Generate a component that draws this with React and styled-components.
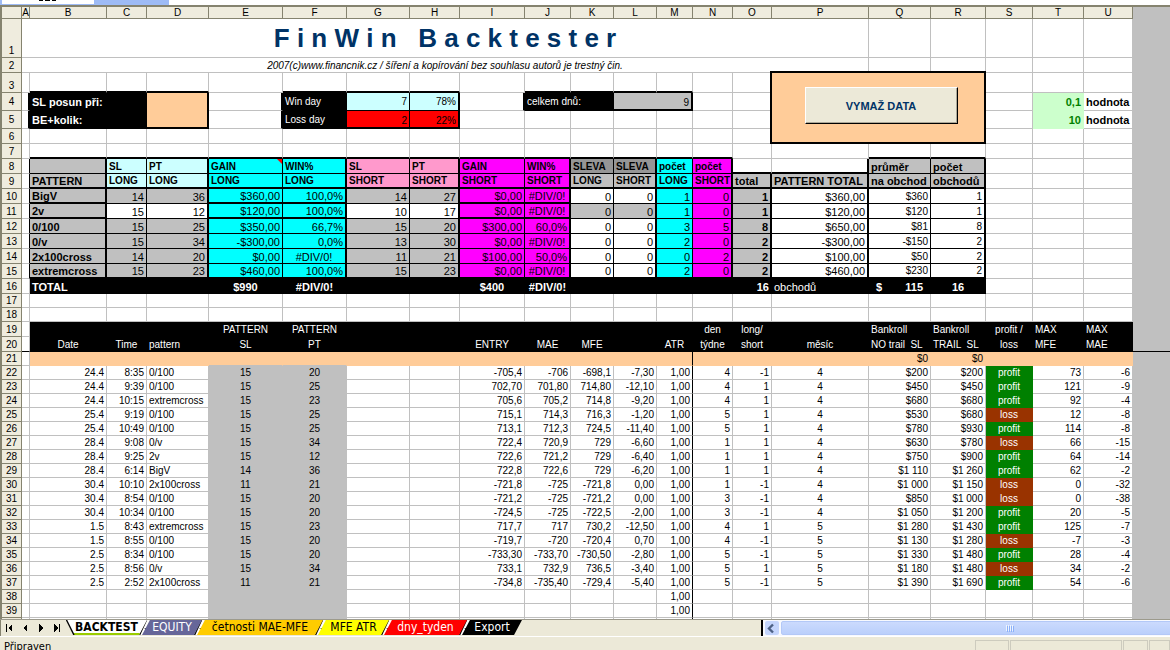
import React from 'react'
import styled, { createGlobalStyle } from 'styled-components'

const c = {
  grid: '#c0c0c0',
  chrome: '#ece9d8',
  chromeLine: '#85836f',
  black: '#000000',
  white: '#ffffff',
  peach: '#ffcc99',
  ice: '#ccffff',
  cyan: '#00ffff',
  pink: '#ff99cc',
  magenta: '#ff00ff',
  grey: '#c0c0c0',
  darkGrey: '#969696',
  mint: '#ccffcc',
  green: '#008000',
  brown: '#993300',
  red: '#ff0000',
  navy: '#003366',
}

const columns = [
  ['A', 8],
  ['B', 77],
  ['C', 40],
  ['D', 62],
  ['E', 74],
  ['F', 64],
  ['G', 63],
  ['H', 50],
  ['I', 65],
  ['J', 46],
  ['K', 43],
  ['L', 43],
  ['M', 36],
  ['N', 40],
  ['O', 39],
  ['P', 97],
  ['Q', 62],
  ['R', 55],
  ['S', 47],
  ['T', 51],
  ['U', 49],
]

const letters = columns.map(([letter]) => letter)

// pattern, SL, PT, gain, win, SL, PT, gain, win, fee, fee, count, count, total, sum, average, trades
const patterns = [
  ['BigV', 14, 36, '$360,00', '100,0%', 14, 27, '$0,00', '#DIV/0!', 0, 0, 1, 0, 1, '$360,00', '$360', 1],
  ['2v', 15, 12, '$120,00', '100,0%', 10, 17, '$0,00', '#DIV/0!', 0, 0, 1, 0, 1, '$120,00', '$120', 1],
  ['0/100', 15, 25, '$350,00', '66,7%', 15, 20, '$300,00', '60,0%', 0, 0, 3, 5, 8, '$650,00', '$81', 8],
  ['0/v', 15, 34, '-$300,00', '0,0%', 13, 30, '$0,00', '#DIV/0!', 0, 0, 2, 0, 2, '-$300,00', '-$150', 2],
  ['2x100cross', 14, 20, '$0,00', '#DIV/0!', 11, 21, '$100,00', '50,0%', 0, 0, 0, 2, 2, '$100,00', '$50', 2],
  ['extremcross', 15, 23, '$460,00', '100,0%', 15, 23, '$0,00', '#DIV/0!', 0, 0, 2, 0, 2, '$460,00', '$230', 2],
]

// date, time, pattern, SL, PT, entry, MAE, MFE, L, day, long/short, month, bankroll, trail, result, max MFE, max MAE
const trades = [
  ['24.4', '8:35', '0/100', 15, 20, '-705,4', '-706', '-698,1', '-7,30', 4, -1, 4, '$200', '$200', 'profit', 73, -6],
  ['24.4', '9:39', '0/100', 15, 25, '702,70', '701,80', '714,80', '-12,10', 4, 1, 4, '$450', '$450', 'profit', 121, -9],
  ['24.4', '10:15', 'extremcross', 15, 23, '705,6', '705,2', '714,8', '-9,20', 4, 1, 4, '$680', '$680', 'profit', 92, -4],
  ['25.4', '9:19', '0/100', 15, 25, '715,1', '714,3', '716,3', '-1,20', 5, 1, 4, '$530', '$680', 'loss', 12, -8],
  ['25.4', '10:49', '0/100', 15, 25, '713,1', '712,3', '724,5', '-11,40', 5, 1, 4, '$780', '$930', 'profit', 114, -8],
  ['28.4', '9:08', '0/v', 15, 34, '722,4', '720,9', '729', '-6,60', 1, 1, 4, '$630', '$780', 'loss', 66, -15],
  ['28.4', '9:25', '2v', 15, 12, '722,6', '721,2', '729', '-6,40', 1, 1, 4, '$750', '$900', 'profit', 64, -14],
  ['28.4', '6:14', 'BigV', 14, 36, '722,8', '722,6', '729', '-6,20', 1, 1, 4, '$1 110', '$1 260', 'profit', 62, -2],
  ['30.4', '10:10', '2x100cross', 11, 21, '-721,8', '-725', '-721,8', '0,00', 1, -1, 4, '$1 000', '$1 150', 'loss', 0, -32],
  ['30.4', '8:54', '0/100', 15, 20, '-721,2', '-725', '-721,2', '0,00', 3, -1, 4, '$850', '$1 000', 'loss', 0, -38],
  ['30.4', '10:34', '0/100', 15, 20, '-724,5', '-725', '-722,5', '-2,00', 3, -1, 4, '$1 050', '$1 200', 'profit', 20, -5],
  ['1.5', '8:43', 'extremcross', 15, 23, '717,7', '717', '730,2', '-12,50', 4, 1, 5, '$1 280', '$1 430', 'profit', 125, -7],
  ['1.5', '8:55', '0/100', 15, 20, '-719,7', '-720', '-720,4', '0,70', 4, -1, 5, '$1 130', '$1 280', 'loss', -7, -3],
  ['2.5', '8:34', '0/100', 15, 20, '-733,30', '-733,70', '-730,50', '-2,80', 5, -1, 5, '$1 330', '$1 480', 'profit', 28, -4],
  ['2.5', '8:56', '0/v', 15, 34, '733,1', '732,9', '736,5', '-3,40', 5, 1, 5, '$1 180', '$1 480', 'loss', 34, -2],
  ['2.5', '2:52', '2x100cross', 11, 21, '-734,8', '-735,40', '-729,4', '-5,40', 5, -1, 5, '$1 390', '$1 690', 'profit', 54, -6],
]

const sheets = [
  { name: 'BACKTEST', width: 81, fill: c.white, ink: c.black, active: true },
  { name: 'EQUITY', width: 60, fill: '#666699', ink: c.white },
  { name: 'četnosti MAE-MFE', width: 126, fill: '#ffcc00', ink: c.black },
  { name: 'MFE ATR', width: 71, fill: '#ffff00', ink: c.black },
  { name: 'dny_tyden', width: 83, fill: c.red, ink: c.white },
  { name: 'Export', width: 60, fill: c.black, ink: c.white },
]

// Builds a row of cells from a { column: cell } map, the rest stays empty.
// `skip` holds columns that are covered by a merged cell.
const fillRow = (cells, skip = '') =>
  letters
    .filter((letter) => !skip.includes(letter))
    .map((letter) => ({ key: letter, ...cells[letter] }))

const topHeads = {
  C: ['SL', 'LONG', c.ice],
  D: ['PT', 'LONG', c.ice],
  E: ['GAIN', 'LONG', c.cyan],
  F: ['WIN%', 'LONG', c.cyan],
  G: ['SL', 'SHORT', c.pink],
  H: ['PT', 'SHORT', c.pink],
  I: ['GAIN', 'SHORT', c.magenta],
  J: ['WIN%', 'SHORT', c.magenta],
  K: ['SLEVA', 'LONG', c.darkGrey],
  L: ['SLEVA', 'SHORT', c.darkGrey],
  M: ['počet', 'LONG', c.cyan],
  N: ['počet', 'SHORT', c.magenta],
}

const rightOf = (letter) => ('BDFHJLNOPR'.includes(letter) ? 'thick' : 'thin')

const headRow = (line) => {
  const bottom = line === 0 ? 'thin' : 'thick'
  const cells = {
    A: { right: 'thin' },
    B: { text: line ? 'PATTERN' : '', fill: c.grey, bold: true, size: 11, right: 'thick', bottom },
    O: line
      ? { text: 'total', bold: true, size: 11, fill: c.grey, right: 'thick', bottom }
      : { bottom: 'thick' },
    P: line
      ? { text: 'PATTERN TOTAL', bold: true, size: 11, fill: c.grey, right: 'thick', bottom }
      : { right: 'thick', bottom: 'thick' },
    Q: { text: line ? 'na obchod' : 'průměr', bold: true, size: 11, fill: c.grey, right: 'thin', bottom },
    R: { text: line ? 'obchodů' : 'počet', bold: true, size: 11, fill: c.grey, right: 'thick', bottom },
  }
  Object.entries(topHeads).forEach(([letter, [first, second, fill]]) => {
    cells[letter] = {
      text: line ? second : first,
      fill: line && 'KL'.includes(letter) ? c.grey : fill,
      bold: true,
      right: rightOf(letter),
      bottom,
      note: line === 0 && letter === 'E',
    }
  })
  return fillRow(cells)
}

const patternFills = {
  B: c.grey,
  E: c.cyan,
  F: c.cyan,
  I: c.magenta,
  J: c.magenta,
  M: c.cyan,
  N: c.magenta,
  O: c.grey,
  P: c.white,
  Q: c.white,
  R: c.white,
}

const patternRow = (values, index) => {
  const cells = { A: { right: 'thin' } }
  const last = index === patterns.length - 1
  values.forEach((value, i) => {
    const letter = letters[i + 1]
    let fill = patternFills[letter]
    if ('CDGH'.includes(letter)) fill = index === 1 ? c.white : c.grey
    if ('KL'.includes(letter)) fill = index === 1 ? c.grey : c.white
    const accent = index < 2 && 'BEFIJ'.includes(letter)
    cells[letter] = {
      text: value,
      fill,
      size: 'QR'.includes(letter) ? 10 : 11,
      bold: 'BO'.includes(letter),
      align: letter === 'B' ? 'left' : value === '#DIV/0!' ? 'center' : 'right',
      right: rightOf(letter),
      bottom: last || accent ? 'thick' : 'thin',
    }
  })
  return fillRow(cells)
}

const blackCells = (from, to, texts) => {
  const cells = {}
  letters.slice(letters.indexOf(from), letters.indexOf(to) + 1).forEach((letter) => {
    cells[letter] = { fill: c.black, ink: c.white, align: 'center', ...texts[letter] }
  })
  return cells
}

const tradeRow = (values) => {
  const slots = 'BCDEFIJKLNOPQRSTU'
  const cells = {
    M: { text: '1,00', align: 'right', right: 'thin' },
  }
  values.forEach((value, i) => {
    const letter = slots[i]
    cells[letter] = {
      text: value,
      align: letter === 'D' ? 'left' : 'EFPS'.includes(letter) ? 'center' : 'right',
    }
    if ('EF'.includes(letter)) cells[letter].fill = c.grey
    if (letter === 'S') {
      cells[letter].fill = value === 'profit' ? c.green : c.brown
      cells[letter].ink = c.white
    }
  })
  return fillRow(cells)
}

const emptyTradeRow = (text) =>
  fillRow({
    E: { fill: c.grey },
    F: { fill: c.grey },
    M: { text, align: 'right', right: 'thin' },
  })

const thickBottom = (list) =>
  Object.fromEntries([...list].map((letter) => [letter, { bottom: 'thick' }]))

const label = (text, rest) => ({ text, fill: c.black, ink: c.white, middle: true, ...rest })

const peachRow = () => {
  const cells = {}
  letters.slice(1).forEach((letter) => {
    cells[letter] = { fill: c.peach, align: 'right' }
  })
  cells.E.bottom = 'grid'
  cells.F.bottom = 'grid'
  cells.M.right = 'thin'
  cells.Q.text = '$0'
  cells.R.text = '$0'
  return fillRow(cells)
}

const rows = [
  {
    height: 39,
    cells: fillRow({ A: { kind: 'title', span: 16, align: 'center', middle: true } }, 'BCDEFGHIJKLMNOP'),
  },
  {
    height: 15,
    cells: fillRow({ A: { kind: 'subtitle', span: 16, align: 'center' } }, 'BCDEFGHIJKLMNOP'),
  },
  {
    height: 20,
    cells: fillRow(
      { ...thickBottom('BCDFGHJKLM'), P: { kind: 'clear', span: 3, rowSpan: 4 } },
      'QR'
    ),
  },
  {
    height: 18,
    middle: true,
    cells: fillRow(
      {
        A: { right: 'thick' },
        B: label('SL posun při:', { span: 2, bold: true, size: 11 }),
        D: { fill: c.peach, rowSpan: 2, right: 'thick', bottom: 'thick' },
        E: { right: 'thick' },
        F: label('Win day'),
        G: { text: '7', align: 'right', fill: c.ice, right: 'thin', bottom: 'thin', middle: true },
        H: { text: '78%', align: 'right', fill: c.ice, right: 'thick', bottom: 'thin', middle: true },
        I: { right: 'thick' },
        J: label('celkem dnů:', { span: 2 }),
        L: { text: '9', align: 'right', span: 2, fill: c.grey, right: 'thick', bottom: 'thick' },
        T: { text: '0,1', align: 'right', bold: true, size: 11, fill: c.mint, ink: c.green, middle: true },
        U: { text: 'hodnota', bold: true, size: 11, middle: true },
      },
      'CKMPQR'
    ),
  },
  {
    height: 18,
    middle: true,
    cells: fillRow(
      {
        A: { right: 'thick' },
        B: label('BE+kolik:', { span: 2, bold: true, size: 11 }),
        E: { right: 'thick' },
        F: label('Loss day'),
        G: { text: '2', align: 'right', fill: c.red, right: 'thin', bottom: 'thick' },
        H: { text: '22%', align: 'right', fill: c.red, right: 'thick', bottom: 'thick' },
        T: { text: '10', align: 'right', bold: true, size: 11, fill: c.mint, ink: c.green, middle: true },
        U: { text: 'hodnota', bold: true, size: 11, middle: true },
      },
      'CDPQR'
    ),
  },
  { height: 15, cells: fillRow({}, 'PQR') },
  { height: 15, cells: fillRow(thickBottom('BCDEFGHIJKLMNQR')) },
  { height: 15, cells: headRow(0) },
  { height: 15, cells: headRow(1) },
  ...patterns.map((values, i) => ({ height: 15, cells: patternRow(values, i) })),
  {
    height: 15,
    cells: fillRow(
      blackCells('B', 'R', {
        B: { text: 'TOTAL', bold: true, size: 11, align: 'left' },
        E: { text: '$990', bold: true, size: 11 },
        F: { text: '#DIV/0!', bold: true, size: 11 },
        I: { text: '$400', bold: true, size: 11 },
        J: { text: '#DIV/0!', bold: true, size: 11 },
        O: { text: '16', bold: true, size: 11, align: 'right' },
        P: { text: 'obchodů', size: 11, align: 'left' },
        Q: { kind: 'money', bold: true, size: 11 },
        R: { text: '16', bold: true, size: 11 },
      })
    ),
  },
  { height: 14, cells: fillRow({}) },
  { height: 14, cells: fillRow({}) },
  {
    height: 15,
    cells: fillRow(
      blackCells('B', 'U', {
        E: { text: 'PATTERN' },
        F: { text: 'PATTERN' },
        N: { text: 'den' },
        O: { text: 'long/' },
        Q: { text: 'Bankroll', align: 'left' },
        R: { text: 'Bankroll', align: 'left' },
        S: { text: 'profit /' },
        T: { text: 'MAX', align: 'left' },
        U: { text: 'MAX', align: 'left' },
      })
    ),
  },
  {
    height: 15,
    split: true,
    cells: fillRow({
      A: { bottom: 'thin' },
      ...blackCells('B', 'U', {
        B: { text: 'Date' },
        C: { text: 'Time' },
        D: { text: 'pattern', align: 'left' },
        E: { text: 'SL' },
        F: { text: 'PT' },
        I: { text: 'ENTRY' },
        J: { text: 'MAE' },
        K: { text: 'MFE' },
        M: { text: 'ATR' },
        N: { text: 'týdne' },
        O: { text: 'short' },
        P: { text: 'měsíc' },
        Q: { text: 'NO trail  SL', align: 'left' },
        R: { text: 'TRAIL  SL', align: 'left' },
        S: { text: 'loss' },
        T: { text: 'MFE', align: 'left' },
        U: { text: 'MAE', align: 'left' },
      }),
    }),
  },
  { height: 14, cells: peachRow() },
  ...trades.map((values) => ({ height: 14, cells: tradeRow(values) })),
  { height: 14, cells: emptyTradeRow('1,00') },
  { height: 14, cells: emptyTradeRow('1,00') },
  { height: 14, unnumbered: true, cells: emptyTradeRow('') },
]

const CellContent = ({ cell }) => {
  if (cell.kind === 'title') {
    return <Title>{'F i n W i n   B a c k t e s t e r'}</Title>
  }
  if (cell.kind === 'subtitle') {
    return (
      <Subtitle>
        2007(c)www.financnik.cz / šíření a kopírování bez souhlasu autorů je trestný čin.
      </Subtitle>
    )
  }
  if (cell.kind === 'money') {
    return (
      <Money>
        <span>$</span>
        <span>115</span>
      </Money>
    )
  }
  return (
    <>
      {cell.text}
      {cell.note && <NoteMark />}
    </>
  )
}

const Sheet = () => {
  return (
    <SheetArea>
      <Grid>
        <colgroup>
          <Col $width={20} />
          {columns.map(([letter, width]) => (
            <Col key={letter} $width={width} />
          ))}
          <col />
        </colgroup>
        <thead>
          <tr>
            <Corner />
            {letters.map((letter) => (
              <ColumnHead key={letter} scope="col">
                {letter}
              </ColumnHead>
            ))}
            <Outside />
          </tr>
        </thead>
        <tbody>
          {rows.map((row, i) => (
            <Row key={i} $height={row.height}>
              <RowHead scope="row" $middle={row.middle}>
                {row.unnumbered ? null : i + 1}
              </RowHead>
              {row.cells.map((cell) =>
                cell.kind === 'clear' ? (
                  <ButtonCell key={cell.key} colSpan={cell.span} rowSpan={cell.rowSpan}>
                    <ClearButton type="button">VYMAŽ DATA</ClearButton>
                  </ButtonCell>
                ) : (
                  <Cell
                    key={cell.key}
                    colSpan={cell.span}
                    rowSpan={cell.rowSpan}
                    $fill={cell.fill}
                    $ink={cell.ink}
                    $bold={cell.bold}
                    $size={cell.size}
                    $align={cell.align}
                    $middle={cell.middle}
                    $right={cell.right}
                    $bottom={cell.bottom}
                  >
                    <CellContent cell={cell} />
                  </Cell>
                )
              )}
              <Outside $split={row.split} />
            </Row>
          ))}
        </tbody>
      </Grid>
    </SheetArea>
  )
}

const navIcons = [
  ['První list', 'M5 4h1v8h-1z M11 4v8l-4-4z'],
  ['Předchozí list', 'M10 4v8l-4-4z'],
  ['Další list', 'M6 4v8l4-4z'],
  ['Poslední list', 'M5 4v8l4-4z M10 4h1v8h-1z'],
]

const Footer = () => {
  return (
    <footer>
      <TabBar>
        <TabArea>
          {navIcons.map(([name, path]) => (
            <NavButton key={name} type="button" aria-label={name}>
              <svg width="16" height="16" viewBox="0 0 16 16" shapeRendering="crispEdges">
                <path d={path} />
              </svg>
            </NavButton>
          ))}
          <TabList>
            {sheets.map((sheet, i) => (
              <React.Fragment key={sheet.name}>
                <Tab
                  type="button"
                  $width={sheet.width}
                  $fill={sheet.fill}
                  $ink={sheet.ink}
                  $active={sheet.active}
                >
                  {sheet.name}
                </Tab>
                {i < sheets.length - 1 && (
                  <Slash width="12" height="15" viewBox="0 0 12 15">
                    <path d="M10.5 0L3.5 15" stroke="#fff" strokeWidth="2" />
                    <path d="M8.5 0L1.5 15" stroke="#000" strokeWidth="1.4" />
                    <path d="M7 8L10 15" stroke="#000" strokeWidth="1" />
                  </Slash>
                )}
              </React.Fragment>
            ))}
            <FirstEdge width="9" height="15" viewBox="0 0 9 15">
              <path d="M0 0L8 15H0z" fill={c.chrome} />
              <path d="M0.5 0L8 15" stroke="#000" strokeWidth="1.4" />
            </FirstEdge>
          </TabList>
        </TabArea>
        <ScrollBar>
          <ScrollButton type="button" aria-label="Posunout vlevo">
            <svg width="13" height="13" viewBox="0 0 13 13">
              <path d="M8 2.5L4 6.5L8 10.5" fill="none" stroke="#4d6185" strokeWidth="2.4" />
            </svg>
          </ScrollButton>
          <ScrollThumb>
            <svg width="8" height="7" viewBox="0 0 8 7" shapeRendering="crispEdges">
              <path d="M0 0h1v6h-1z M2 0h1v6h-1z M4 0h1v6h-1z M6 0h1v6h-1z" fill="#eef4fe" />
              <path d="M1 1h1v6h-1z M3 1h1v6h-1z M5 1h1v6h-1z M7 1h1v6h-1z" fill="#8cb0f8" />
            </svg>
          </ScrollThumb>
        </ScrollBar>
      </TabBar>
      <StatusBar>
        <StatusText>Připraven</StatusText>
        <StatusPane $width={34} />
        <StatusPane $width={112} />
        <StatusPane $width={25} />
        <StatusPane $width={21} />
      </StatusBar>
    </footer>
  )
}

const App = () => {
  return (
    <Window>
      <GlobalStyle />
      <TopStrip>
        <Floating>
          <FloatingBox>
            <svg width="20" height="2" viewBox="0 0 20 2" shapeRendering="crispEdges">
              <path d="M1 0h4v1h-4z M7 0h5v1h-5z M14 0h4v1h-4z" />
            </svg>
          </FloatingBox>
        </Floating>
      </TopStrip>
      <Sheet />
      <Footer />
    </Window>
  )
}

const GlobalStyle = createGlobalStyle`
  *, *::before, *::after {
    box-sizing: border-box;
  }
  body {
    margin: 0;
    background: ${c.white};
    font-family: 'Liberation Sans', Arial, sans-serif;
    font-size: 10px;
    line-height: 12px;
    color: ${c.black};
  }
  button {
    font-family: inherit;
    padding: 0;
    border: 0;
  }
`

const Window = styled.div`
  display: flex;
  flex-direction: column;
  height: 100vh;
  overflow: hidden;
`

const TopStrip = styled.div`
  flex: none;
  height: 7px;
  border-bottom: 2px solid ${c.chromeLine};
`

const Floating = styled.div`
  width: 169px;
  height: 5px;
  padding-left: 2px;
  background: #9ebbf5;
`

const FloatingBox = styled.div`
  display: flex;
  justify-content: center;
  width: 92px;
  height: 4px;
  background: ${c.white};
`

const SheetArea = styled.main`
  flex: 1;
  min-height: 0;
  overflow: hidden;
  border-left: 2px solid ${c.chromeLine};
  background: ${c.grey};
`

const Grid = styled.table`
  width: 100%;
  min-width: 1131px;
  table-layout: fixed;
  border-collapse: separate;
  border-spacing: 0;
`

const Col = styled.col`
  width: ${(p) => p.$width}px;
`

const Row = styled.tr`
  height: ${(p) => p.$height}px;
`

const ColumnHead = styled.th`
  height: 12px;
  padding: 0;
  border-right: 1px solid ${c.chromeLine};
  border-bottom: 1px solid ${c.chromeLine};
  background: #efecde;
  font-weight: 400;
  line-height: 11px;
`

const Corner = styled(ColumnHead).attrs({ as: 'td' })``

const RowHead = styled.th`
  padding: 0;
  border-right: 1px solid ${c.chromeLine};
  border-bottom: 1px solid ${c.chromeLine};
  background: #efecde;
  font-weight: 400;
  text-align: center;
  vertical-align: ${(p) => (p.$middle ? 'middle' : 'bottom')};
`

const edge = (kind, fill) => {
  if (kind === 'thin') return '1px solid #000'
  if (kind === 'thick') return '2px solid #000'
  if (kind === 'grid') return `1px solid ${c.grid}`
  return `1px solid ${fill && fill !== c.white ? fill : c.grid}`
}

const Cell = styled.td`
  position: relative;
  padding: 0 2px;
  border-right: ${(p) => edge(p.$right, p.$fill)};
  border-bottom: ${(p) => edge(p.$bottom, p.$fill)};
  background: ${(p) => p.$fill || c.white};
  color: ${(p) => p.$ink || c.black};
  font-size: ${(p) => p.$size || 10}px;
  font-weight: ${(p) => (p.$bold ? 700 : 400)};
  text-align: ${(p) => p.$align || 'left'};
  vertical-align: ${(p) => (p.$middle ? 'middle' : 'bottom')};
  white-space: pre;
`

const Outside = styled.td`
  padding: 0;
  border-bottom: 1px solid ${(p) => (p.$split ? c.black : c.grey)};
  background: ${c.grey};
`

const Title = styled.h1`
  margin: 0;
  color: ${c.navy};
  font-size: 26px;
  line-height: 30px;
`

const Subtitle = styled.em`
  font-size: 10px;
`

const Money = styled.span`
  display: flex;
  justify-content: space-between;
  padding: 0 5px;
`

const NoteMark = styled.span`
  position: absolute;
  top: 0;
  right: 0;
  border-top: 5px solid ${c.red};
  border-left: 5px solid transparent;
`

const ButtonCell = styled.td`
  position: relative;
  z-index: 1;
  padding: 0 0 4px 6px;
  border-right: 2px solid #000;
  border-bottom: 2px solid #000;
  box-shadow: -2px 0 #000, 0 -2px #000, -2px -2px #000;
  background: ${c.peach};
  text-align: center;
  vertical-align: middle;
`

const ClearButton = styled.button`
  display: block;
  width: 153px;
  height: 37px;
  margin: 0 auto;
  border: 1px solid #000;
  border-top-color: ${c.white};
  border-left-color: ${c.white};
  box-shadow: inset -1px -1px #aca899;
  background: ${c.chrome};
  color: ${c.navy};
  font-size: 11px;
  font-weight: 700;
`

const TabBar = styled.div`
  display: flex;
  height: 18px;
  border-top: 1px solid #9c9a8c;
  border-bottom: 1px solid ${c.white};
  background: ${c.chrome};
`

const TabArea = styled.nav`
  display: flex;
  width: 65%;
  border-left: 1px solid ${c.chromeLine};
`

const NavButton = styled.button`
  width: 16px;
  height: 16px;
  background: ${c.chrome};

  svg {
    display: block;
  }
`

const TabList = styled.div`
  position: relative;
  display: flex;
  height: 15px;
  margin-left: 1px;
`

const Tab = styled.button`
  width: ${(p) => p.$width}px;
  height: 15px;
  margin-right: -5px;
  box-shadow: ${(p) => (p.$active ? 'inset 0 -2px #99cc00' : 'none')};
  background: ${(p) => p.$fill};
  color: ${(p) => p.$ink};
  font-family: 'DejaVu Sans Condensed', 'DejaVu Sans', sans-serif;
  font-size: 12px;
  font-weight: ${(p) => (p.$active ? 700 : 400)};
  line-height: 15px;
  white-space: nowrap;
  clip-path: polygon(8px 0, 100% 0, calc(100% - 8px) 100%, 0 100%);

  &:first-child {
    clip-path: polygon(0 0, 100% 0, calc(100% - 8px) 100%, 0 100%);
  }
`

const Slash = styled.svg`
  flex: none;
  margin-left: -4px;
  margin-right: -8px;
`

const FirstEdge = styled.svg`
  position: absolute;
  top: 0;
  left: 0;
`

const ScrollBar = styled.div`
  flex: 1;
  display: flex;
  gap: 2px;
  padding: 1px 0 1px 2px;
  border-left: 2px solid #000;
  background: #f7f9fe;
`

const ScrollButton = styled.button`
  display: grid;
  place-items: center;
  width: 14px;
  border-radius: 2px;
  background: #c4d5fc;
`

const ScrollThumb = styled.div`
  flex: 1;
  display: grid;
  place-items: center;
  margin-right: -70px;
  border: 1px solid #b3c8f7;
  border-radius: 2px;
  background: linear-gradient(#cbdafd, #bacffb);
`

const StatusBar = styled.div`
  display: flex;
  gap: 1px;
  height: 13px;
  padding-top: 3px;
  overflow: hidden;
  background: ${c.chrome};
`

const StatusText = styled.div`
  flex: 1;
  padding: 1px 4px;
  font-family: 'DejaVu Sans Condensed', 'DejaVu Sans', sans-serif;
  font-size: 11px;
`

const StatusPane = styled.div`
  width: ${(p) => p.$width}px;
  height: 18px;
  border: 1px solid #cdcbbe;
`

export default App
